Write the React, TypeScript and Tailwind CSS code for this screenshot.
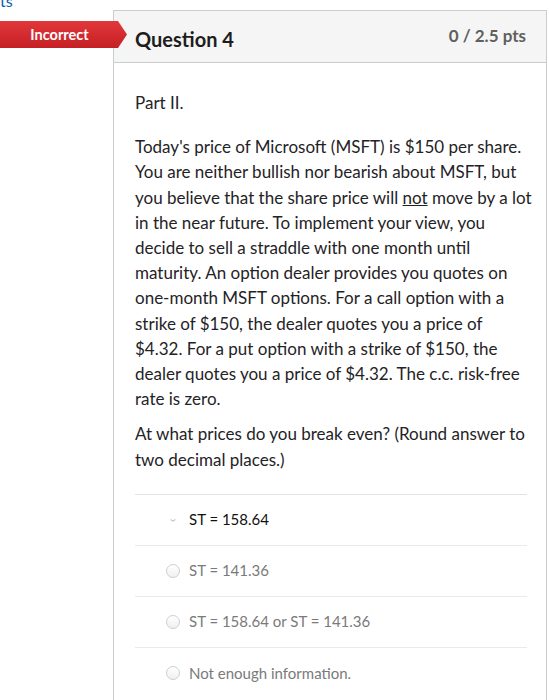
import React from "react";

const answers = [
  { text: "ST = 158.64", selected: true },
  { text: "ST = 141.36", selected: false },
  { text: "ST = 158.64 or ST = 141.36", selected: false },
  { text: "Not enough information.", selected: false },
];

export default function App() {
  return (
    <div
      className="relative w-[549px] h-[700px] overflow-hidden bg-white"
      style={{ fontFamily: "Lato, 'Open Sans', sans-serif" }}
    >
      <div className="absolute left-0 top-[-9px] text-[16px] text-[#0b5cad] leading-[20px]">ts</div>

      <div className="ml-[113px] mt-[10px] w-[434px] h-[720px] border border-[#c7cdd1]">
        <div className="h-[52px] bg-[#f5f5f5] border-b border-[#c7cdd1] flex items-center justify-between pl-[21px] pr-[20px]">
          <span className="text-[20px] font-bold text-[#1d1d1d] mt-[4px]">Question 4</span>
          <span className="text-[17px] font-bold text-[#5f5f5f] -mt-[2px]">0 / 2.5 pts</span>
        </div>
        <div className="pl-[21px] pr-[14px] pt-[27px] text-[17px] leading-[25.2px] text-[#1f2326]">
          <p>Part II.</p>
          <p className="mt-[19px]">
            Today's price of Microsoft (MSFT) is $150 per share. You are neither bullish nor bearish about MSFT, but you
            believe that the share price will <span className="underline">not</span> move by a lot in the near future. To
            implement your view, you decide to sell a straddle with one month until maturity. An option dealer provides
            you quotes on one-month MSFT options. For a call option with a strike of $150, the dealer quotes you a price
            of $4.32. For a put option with a strike of $150, the dealer quotes you a price of $4.32. The c.c. risk-free
            rate is zero.
          </p>
          <p className="mt-[10px]">At what prices do you break even? (Round answer to two decimal places.)</p>

          <div className="mt-[22px] w-[392px] border-t border-[#e1e4e6]">
            {answers.map((a, i) => (
              <div
                key={i}
                className={`h-[51px] flex items-center pl-[31px] text-[15px] ${
                  i < answers.length - 1 ? "border-b border-[#e8eaec]" : ""
                } ${a.selected ? "text-[#111]" : "text-[#7a7a7a]"}`}
              >
                <span className="w-[14px] h-[14px] mr-[9px] flex items-center justify-center">
                  {a.selected ? (
                    <svg width="8" height="6" viewBox="0 0 8 6">
                      <path d="M1.5 2.5 L4 4 L6.5 2.5" stroke="#c8c8c8" strokeWidth="1.2" fill="none" />
                    </svg>
                  ) : (
                    <span className="block w-[14px] h-[14px] rounded-full border border-[#cfcfcf] bg-gradient-to-b from-white to-[#f0f0f0]" />
                  )}
                </span>
                <span>{a.text}</span>
              </div>
            ))}
          </div>
        </div>
      </div>

      <div
        className="absolute left-0 top-[21px] w-[127px] h-[27px] bg-gradient-to-b from-[#e2373b] to-[#c41f24] flex items-center justify-center pr-[8px]"
        style={{ clipPath: "polygon(0 0, 118px 0, 127px 50%, 118px 100%, 0 100%)" }}
      >
        <span className="text-white text-[14.5px] font-bold">Incorrect</span>
      </div>
    </div>
  );
}
